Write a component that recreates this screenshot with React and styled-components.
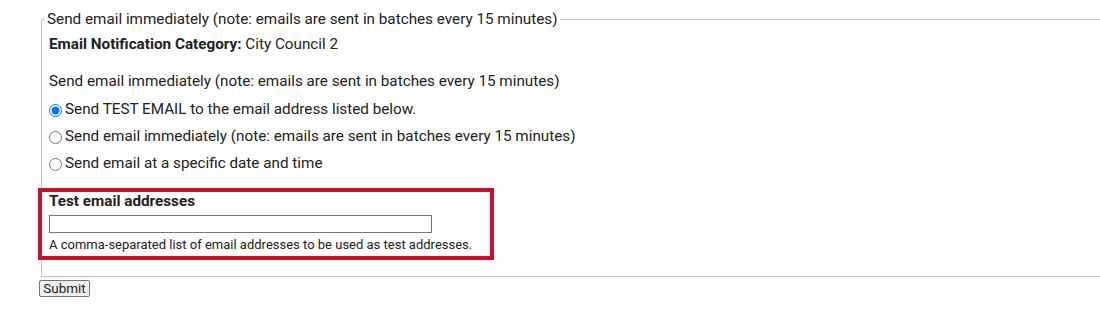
import React from "react";
import styled, { createGlobalStyle } from "styled-components";

const Global = createGlobalStyle`
  html, body { margin: 0; padding: 0; background: #fff; }
  body { font-family: Roboto, "Liberation Sans", Arial, sans-serif; font-size: 15.25px; color: #222; }
`;

const Page = styled.div`
  padding: 0 0 0 39px;
  overflow: hidden;
  width: 1100px;
  box-sizing: border-box;
`;

const Fieldset = styled.fieldset`
  margin: 11px 0 0 2px;
  width: 1200px;
  border: 1px solid #c4c4c4;
  padding: 0 0 16px 7px;
  min-width: 0;
`;

const Legend = styled.legend`
  padding: 0 2px;
  margin-left: -4px;
  line-height: 16px;
  font-size: 15.25px;
`;

const Line = styled.div`
  line-height: 20px;
  margin-top: ${(p) => p.$mt || 0}px;
`;

const Bold = styled.strong`
  font-weight: 700;
`;

const RadioRow = styled.label`
  display: flex;
  align-items: center;
  height: 20px;
  margin-top: ${(p) => p.$mt || 0}px;
`;

const Radio = styled.input.attrs({ type: "radio" })`
  margin: 2px 3px 0 0;
  width: 13px;
  height: 13px;
`;

const Highlight = styled.div`
  margin: 15px 0 0 -11px;
  width: 456px;
  box-sizing: border-box;
  border: 4px solid #c8102e;
  padding: 0 0 3px 7px;
`;

const FieldTitle = styled.div`
  font-weight: 700;
  font-size: 15.25px;
  line-height: 18px;
`;

const TextInput = styled.input`
  display: block;
  margin-top: 5px;
  width: 383px;
  height: 18px;
  box-sizing: border-box;
  border: 1px solid #767676;
  padding: 0 2px;
`;

const Help = styled.div`
  font-size: 13px;
  line-height: 16px;
  margin-top: 4px;
`;

const SubmitButton = styled.button`
  display: block;
  margin-top: 3px;
  height: 17px;
  width: 51px;
  padding: 0;
  box-sizing: border-box;
  font-family: Roboto, "Liberation Sans", Arial, sans-serif;
  font-size: 13.5px;
  line-height: 15px;
  color: #222;
  background: #efefef;
  border: 1px solid #767676;
  border-radius: 2px;
`;

export default function App() {
  const note = "Send email immediately (note: emails are sent in batches every 15 minutes)";
  return (
    <>
      <Global />
      <Page>
        <Fieldset>
          <Legend>{note}</Legend>
          <Line $mt={7}>
            <Bold>Email Notification Category:</Bold> City Council 2
          </Line>
          <Line $mt={17}>{note}</Line>
          <RadioRow $mt={8}>
            <Radio name="send" defaultChecked />
            Send TEST EMAIL to the email address listed below.
          </RadioRow>
          <RadioRow $mt={7}>
            <Radio name="send" />
            {note}
          </RadioRow>
          <RadioRow $mt={7}>
            <Radio name="send" />
            Send email at a specific date and time
          </RadioRow>
          <Highlight>
            <FieldTitle>Test email addresses</FieldTitle>
            <TextInput type="text" />
            <Help>A comma-separated list of email addresses to be used as test addresses.</Help>
          </Highlight>
        </Fieldset>
        <SubmitButton type="submit">Submit</SubmitButton>
      </Page>
    </>
  );
}
